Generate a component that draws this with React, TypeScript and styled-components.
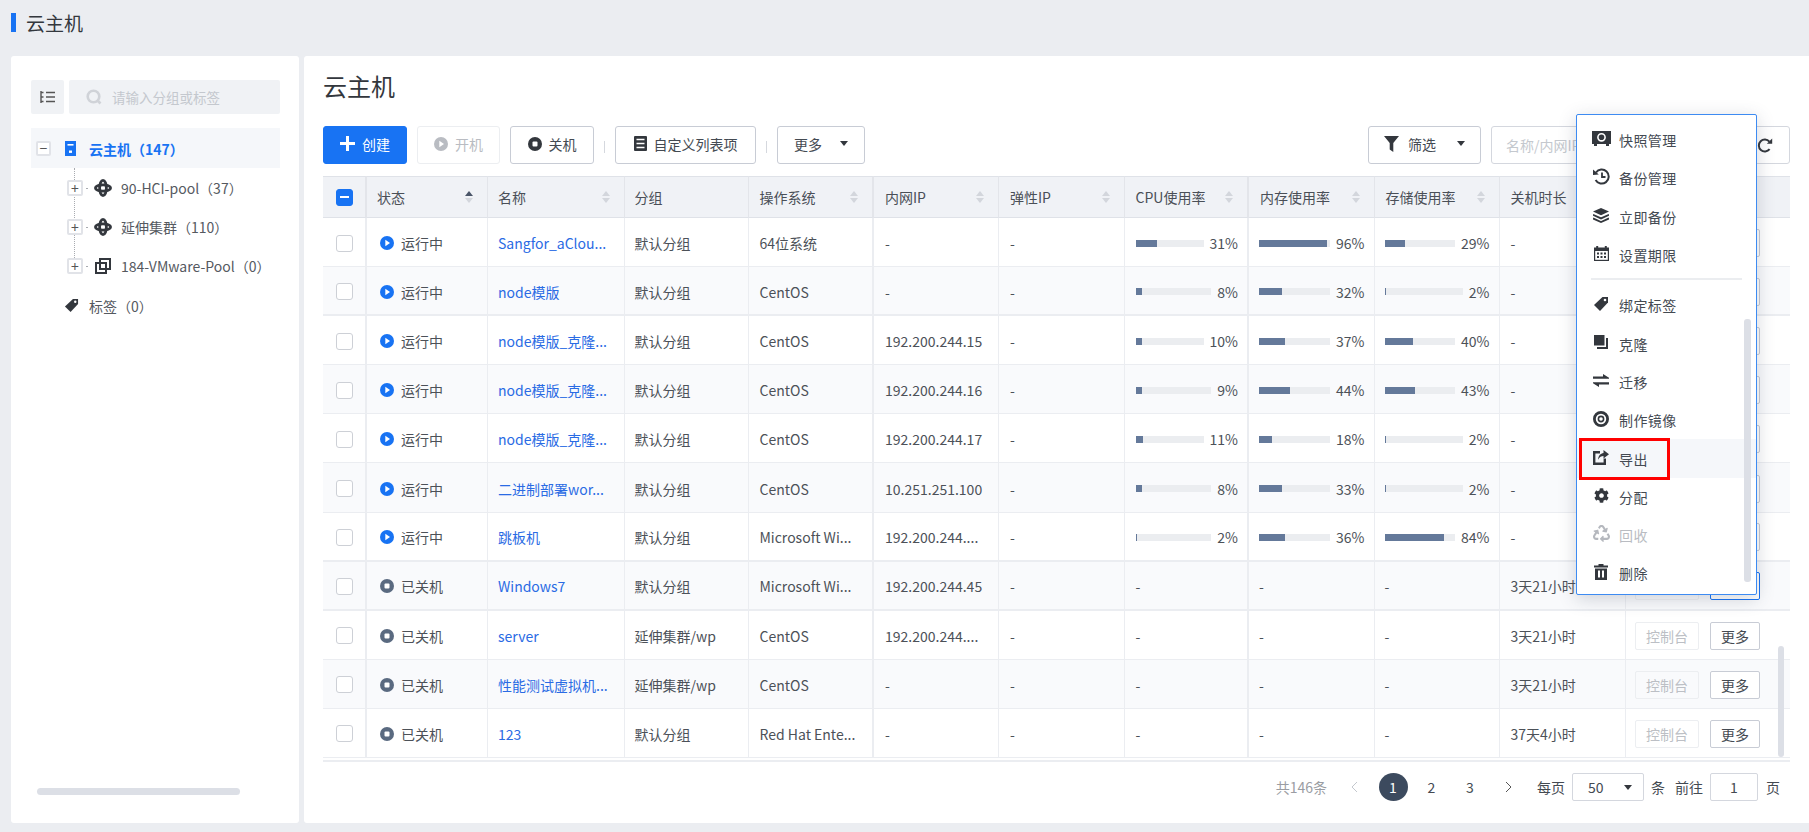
import styled, { createGlobalStyle } from "styled-components";
import { FaCog, FaRecycle } from "react-icons/fa";

const GlobalStyle = createGlobalStyle`
    html, body {
        margin: 0;
        padding: 0;
        background: #ebedf1;
    }
    * {
        box-sizing: border-box;
    }
    body {
        font-family: "Noto Sans CJK SC", "Noto Sans", sans-serif;
        font-size: 14px;
        color: #4c5158;
    }
`;

const Page = styled.div`
    width: 1809px;
    height: 832px;
    display: flex;
    flex-direction: column;
    overflow: hidden;
    background: #ebedf1;
`;

const Header = styled.div`
    height: 56px;
    padding: 13px 0 24px 11px;
    display: flex;
    align-items: center;
    gap: 10px;
    font-size: 19px;
    color: #33373d;
    &::before {
        content: "";
        width: 5px;
        height: 19px;
        background: #1873f3;
    }
`;

const Body = styled.div`
    flex: 1;
    min-height: 0;
    display: flex;
    gap: 5px;
    padding: 0 0 9px 11px;
`;

const LeftPanel = styled.aside`
    width: 288px;
    display: flex;
    flex-direction: column;
    padding: 24px 19px 28px 20px;
    background: #fff;
    border-radius: 3px;
`;

const TreeSearch = styled.div`
    display: flex;
    gap: 5px;
    height: 34px;
    margin-bottom: 14px;
`;

const ToggleBtn = styled.div`
    width: 33px;
    display: flex;
    align-items: center;
    justify-content: center;
    background: #f0f2f5;
    border-radius: 2px;
`;

const SearchBox = styled.div`
    flex: 1;
    display: flex;
    align-items: center;
    gap: 10px;
    padding-left: 17px;
    background: #f0f2f5;
    border-radius: 2px;
    font-size: 13.5px;
    color: #c4c8ce;
`;

const RootRow = styled.div`
    height: 40px;
    display: flex;
    align-items: center;
    padding-left: 5px;
    background: #f5f7fa;
    color: #1873f3;
    font-weight: 700;
`;

const ExpandBox = styled.span<{ $root?: boolean }>`
    width: ${(p) => (p.$root ? 15 : 16)}px;
    height: ${(p) => (p.$root ? 15 : 16)}px;
    flex: none;
    display: flex;
    align-items: center;
    justify-content: center;
    background: #fff;
    border: 2px solid #e1e3e8;
    border-radius: 2px;
    color: #555;
    font-size: 14px;
    font-weight: 400;
    line-height: 1;
    position: relative;
    z-index: 1;
`;

const RootIconSlot = styled.span`
    margin-left: 14px;
    display: flex;
`;

const ChildGroup = styled.div`
    position: relative;
    &::before {
        content: "";
        position: absolute;
        left: 43px;
        top: 0;
        height: 94px;
        border-left: 1px dotted #a8abb0;
    }
`;

const ChildRow = styled.div`
    height: 40px;
    display: flex;
    align-items: center;
    padding-left: 36px;
    margin-top: -1px;
    &:first-child {
        margin-top: 0;
    }
`;

const Stub = styled.span`
    width: 2px;
    height: 1px;
    margin: 0 6px 0 3px;
    background: #a8abb0;
`;

const TreeText = styled.span`
    margin-left: 9px;
    white-space: nowrap;
    color: #55595f;
`;

const RootText = styled.span`
    margin: 2px 0 0 13px;
    white-space: nowrap;
`;

const TagRow = styled.div`
    height: 39px;
    display: flex;
    align-items: center;
    padding-left: 33px;
    gap: 10px;
    color: #55595f;
`;

const TreeScroll = styled.div`
    margin: auto 0 0 6px;
    width: 203px;
    height: 7px;
    border-radius: 4px;
    background: #dcdfe6;
`;

const RightPanel = styled.main`
    flex: 1;
    min-width: 0;
    position: relative;
    display: flex;
    flex-direction: column;
    padding: 12px 19px 0;
    background: #fff;
    border-radius: 3px 0 0 3px;
`;

const Title = styled.h1`
    margin: 0 0 22px;
    height: 36px;
    line-height: 36px;
    font-size: 24px;
    font-weight: 400;
    color: #33373d;
`;

const Toolbar = styled.div`
    height: 38px;
    display: flex;
    align-items: center;
    margin-bottom: 12px;
`;

const Btn = styled.button<{ $w: number; $primary?: boolean; $off?: boolean }>`
    width: ${(p) => p.$w}px;
    height: 38px;
    flex: none;
    display: flex;
    align-items: center;
    justify-content: center;
    gap: 7px;
    padding: 0 0 3px;
    font: inherit;
    border-radius: 3px;
    background: ${(p) => (p.$primary ? "#1873f3" : "#fff")};
    color: ${(p) => (p.$primary ? "#fff" : p.$off ? "#b9bcc2" : "#444a52")};
    border: 1px solid ${(p) => (p.$primary ? "#1873f3" : p.$off ? "#eceef1" : "#c8ccd5")};
`;

const Sep = styled.span`
    width: 1px;
    height: 12px;
    margin: 3px 10px 0;
    background: #d5d8de;
    flex: none;
`;

const Gap = styled.span`
    width: 10px;
    flex: none;
`;

const RightTools = styled.div`
    margin-left: auto;
    display: flex;
    gap: 10px;
`;

const Caret = styled.span`
    width: 0;
    height: 0;
    border-left: 4.5px solid transparent;
    border-right: 4.5px solid transparent;
    border-top: 5px solid #33373d;
`;

const SearchGroup = styled.div`
    display: flex;
    width: 299px;
    height: 38px;
    border: 1px solid #d4d7de;
    border-radius: 3px;
`;

const SearchInput = styled.div`
    flex: 1;
    padding-left: 14px;
    line-height: 36px;
    color: #c4c8ce;
    border-right: 1px solid #d4d7de;
`;

const RefreshBox = styled.div`
    width: 47px;
    display: flex;
    align-items: center;
    justify-content: flex-end;
    padding-right: 16px;
`;

const TableWrap = styled.div`
    position: relative;
    border-bottom: 2px solid #ebedf1;
    padding-bottom: 2px;
`;

const Table = styled.table`
    width: 1467px;
    table-layout: fixed;
    border-collapse: separate;
    border-spacing: 0;
    th {
        height: 42px;
        padding: 0 11px;
        background: #f0f2f6;
        border-top: 1px solid #dfe2e8;
        border-bottom: 1px solid #dfe2e8;
        border-right: 1px solid #e3e5ea;
        font-weight: 400;
        text-align: left;
        color: #4a4f57;
    }
    td {
        height: 49.1px;
        padding: 2px 11px 0;
        border-bottom: 1px solid #ebedf1;
        border-right: 1px solid #ebedf1;
        white-space: nowrap;
    }
    th:nth-child(1), td:nth-child(1),
    th:nth-child(5), td:nth-child(5),
    th:nth-child(8), td:nth-child(8) {
        border-right-width: 2px;
    }
    th:last-child, td:last-child {
        border-right: none;
    }
    td:first-child, th:first-child {
        padding-left: 13px;
        padding-right: 0;
    }
    th:nth-child(2), th:nth-child(3), th:nth-child(4),
    td:nth-child(3), td:nth-child(4) {
        padding-left: 10px;
    }
    td:nth-child(8) {
        padding-right: 9px;
    }
    td:nth-child(9), td:nth-child(10) {
        padding-left: 10px;
        padding-right: 9px;
    }
    td:last-child {
        padding-left: 9.5px;
        padding-right: 0;
    }
`;

const Row = styled.tr<{ $even: boolean; $thick?: boolean }>`
    background: ${(p) => (p.$even ? "#f9fafc" : "#fff")};
    td {
        border-bottom-width: ${(p) => (p.$thick ? 2 : 1)}px;
    }
`;

const HeadInner = styled.div`
    display: flex;
    align-items: center;
    justify-content: space-between;
    padding-right: 3px;
`;

const Sort = styled.span<{ $active?: boolean }>`
    display: flex;
    flex-direction: column;
    gap: 2px;
    &::before, &::after {
        content: "";
        border-left: 4.5px solid transparent;
        border-right: 4.5px solid transparent;
    }
    &::before {
        border-bottom: 5px solid ${(p) => (p.$active ? "#4a5568" : "#d3d6dc")};
    }
    &::after {
        border-top: 5px solid #d3d6dc;
    }
`;

const Check = styled.span<{ $on?: boolean }>`
    display: block;
    width: 17px;
    height: 17px;
    border-radius: 3px;
    border: 1px solid ${(p) => (p.$on ? "#1873f3" : "#cdd0d6")};
    background: ${(p) => (p.$on ? "#1873f3" : "#fff")};
    position: relative;
    &::after {
        content: ${(p) => (p.$on ? '""' : "none")};
        position: absolute;
        left: 3px;
        right: 3px;
        top: 6.5px;
        height: 2px;
        background: #fff;
    }
`;

const Status = styled.div`
    display: flex;
    align-items: center;
    gap: 7px;
    padding-left: 2px;
`;

const Name = styled.a`
    color: #2a6be4;
`;

const Usage = styled.div`
    display: flex;
    align-items: center;
    gap: 6px;
`;

const Track = styled.div`
    flex: 1;
    height: 7px;
    background: #ebedf0;
`;

const Fill = styled.div`
    height: 100%;
    background: #64799a;
`;

const Ops = styled.div`
    display: flex;
    gap: 11px;
`;

const OpBtn = styled.span<{ $off?: boolean; $active?: boolean }>`
    height: 28px;
    display: flex;
    align-items: center;
    justify-content: center;
    width: ${(p) => (p.$off ? 64 : 50)}px;
    border-radius: 2px;
    border: 1px solid ${(p) => (p.$off ? "#eceef1" : p.$active ? "#1873f3" : "#c8ccd5")};
    color: ${(p) => (p.$off ? "#bcbfc5" : "#444a52")};
    background: ${(p) => (p.$off ? "transparent" : "#fff")};
`;

const TableScroll = styled.div`
    position: absolute;
    top: 470px;
    right: 6px;
    width: 6px;
    height: 111px;
    border-radius: 3px;
    background: #dcdfe6;
`;

const Pager = styled.div`
    display: flex;
    align-items: center;
    justify-content: flex-end;
    padding: 11px 10px 0 0;
    color: #444a52;
`;

const Total = styled.span`
    color: #9a9da3;
    margin-right: 13px;
`;

const PageNum = styled.span<{ $active?: boolean; $last?: boolean }>`
    width: 29px;
    height: 28px;
    margin-right: ${(p) => (p.$last ? 0 : 9.5)}px;
    display: flex;
    align-items: center;
    justify-content: center;
    border-radius: 50%;
    background: ${(p) => (p.$active ? "#3c4a5e" : "transparent")};
    color: ${(p) => (p.$active ? "#fff" : "#444a52")};
`;

const Label = styled.span<{ $l: number }>`
    margin-left: ${(p) => p.$l}px;
    white-space: nowrap;
`;

const PageSelect = styled.div`
    width: 72px;
    height: 28px;
    margin-left: 7px;
    padding: 0 11px 0 15px;
    display: flex;
    align-items: center;
    justify-content: space-between;
    border: 1px solid #d4d7de;
    border-radius: 2px;
`;

const PageInput = styled.div`
    width: 48px;
    height: 28px;
    margin-left: 7px;
    display: flex;
    align-items: center;
    justify-content: center;
    border: 1px solid #d4d7de;
    border-radius: 2px;
`;

const Menu = styled.div`
    position: absolute;
    left: 1272px;
    top: 58px;
    width: 181px;
    height: 481px;
    padding-top: 6px;
    background: #fff;
    border: 1px solid #3d8bf2;
    border-radius: 2px;
    box-shadow: 0 4px 18px rgba(60, 70, 90, 0.22);
`;

const MenuItem = styled.div<{ $hover?: boolean; $off?: boolean }>`
    height: 38.3px;
    position: relative;
    display: flex;
    align-items: center;
    gap: 8px;
    padding-left: 14px;
    letter-spacing: 0.4px;
    background: ${(p) => (p.$hover ? "#f5f7fa" : "transparent")};
    color: ${(p) => (p.$off ? "#b9bcc2" : "#444a52")};
`;

const IconSlot = styled.span`
    width: 20px;
    height: 20px;
    display: flex;
    align-items: center;
    justify-content: center;
    margin-top: -3px;
`;

const Divider = styled.div`
    height: 2px;
    margin: 4px 14px 6px;
    background: #ebedf0;
`;

const RedMark = styled.span`
    position: absolute;
    left: 2px;
    top: -1px;
    width: 91px;
    height: 42px;
    border: 3px solid #f00;
`;

const MenuScroll = styled.div`
    position: absolute;
    left: 167px;
    top: 204px;
    width: 7px;
    height: 263px;
    border-radius: 3px;
    background: #dcdfe6;
`;

const dark = "#33373d";

const PlayIcon = ({ color = "#1873f3" }: { color?: string }) => (
    <svg width="14" height="14" viewBox="0 0 14 14">
        <circle cx="7" cy="7" r="7" fill={color} />
        <path d="M5.3 3.8 L10 7 L5.3 10.2 Z" fill="#fff" />
    </svg>
);

const StopIcon = ({ color = "#5a6a80" }: { color?: string }) => (
    <svg width="14" height="14" viewBox="0 0 14 14">
        <circle cx="7" cy="7" r="7" fill={color} />
        <rect x="4.5" y="4.5" width="5" height="5" rx="1" fill="#fff" />
    </svg>
);

const PlusIcon = () => (
    <svg width="15" height="15" viewBox="0 0 15 15">
        <path d="M6 0h3v6h6v3H9v6H6V9H0V6h6z" fill="#fff" />
    </svg>
);

const ListIcon = () => (
    <svg width="13" height="15" viewBox="0 0 13 15">
        <rect width="13" height="15" rx="1" fill={dark} />
        <path d="M2.5 3.5h8M2.5 7.5h8M2.5 11.5h8" stroke="#fff" strokeWidth="1.3" />
    </svg>
);

const FilterIcon = () => (
    <svg width="15" height="16" viewBox="0 0 15 16">
        <path d="M0 0h15L9.3 7v9L5.7 13.5V7z" fill={dark} />
    </svg>
);

const RefreshIcon = () => (
    <svg width="16" height="15" viewBox="0 0 16 15" fill="none">
        <path d="M12.6 11.2A6 6 0 1 1 12.4 3.6" stroke={dark} strokeWidth="2" />
        <path d="M9.8 5.8h5.4V.4z" fill={dark} />
    </svg>
);

const TreeToggleIcon = () => (
    <svg width="15" height="12" viewBox="0 0 15 12" fill="none" stroke="#555" strokeWidth="1.4">
        <path d="M1 0v12M1 1.5h2.5M1 6h2.5M1 10.5h2.5M6 1.5h9M6 6h9M6 10.5h9" />
    </svg>
);

const SearchIcon = () => (
    <svg width="16" height="16" viewBox="0 0 16 16" fill="none" stroke="#d0d3d8" strokeWidth="2.6">
        <circle cx="7.5" cy="7.5" r="5.8" />
        <path d="M11 11l3.5 3.5" />
    </svg>
);

const ServerIcon = () => (
    <svg width="11" height="15" viewBox="0 0 11 15">
        <rect width="11" height="15" fill="#1873f3" />
        <rect x="2.5" y="3" width="6" height="1.6" fill="#fff" />
        <rect x="4" y="9.5" width="3" height="2.4" fill="#fff" />
    </svg>
);

const ClusterIcon = () => (
    <svg width="18" height="18" viewBox="0 0 18 18" fill="none" stroke={dark}>
        <ellipse cx="9" cy="9" rx="3.4" ry="7.6" strokeWidth="2.8" />
        <ellipse cx="9" cy="9" rx="7.6" ry="3.2" strokeWidth="2.8" />
    </svg>
);

const PoolIcon = () => (
    <svg width="18" height="16" viewBox="-1 0 18 16" fill="none" stroke={dark} strokeWidth="2">
        <rect x="5" y="1" width="10" height="10" />
        <rect x="1" y="5" width="10" height="10" />
    </svg>
);

const TagIcon = ({ size = 15 }: { size?: number }) => (
    <svg width={size} height={size} viewBox="0 0 16 16">
        <path d="M9.5 1H15v5.5L7 15 1 9z" fill={dark} />
        <circle cx="12" cy="4" r="1.3" fill="#fff" />
    </svg>
);

const SnapshotIcon = () => (
    <svg width="19" height="17" viewBox="0 0 19 17">
        <path d="M0 1h19v13h-2v2h-3v-2H5v2H2v-2H0z" fill={dark} />
        <circle cx="9.5" cy="7.3" r="3.6" fill="none" stroke="#fff" strokeWidth="1.6" />
    </svg>
);

const HistoryIcon = () => (
    <svg width="17" height="17" viewBox="0 0 17 17" fill="none">
        <path d="M3 4.5A7 7 0 1 1 2.6 12" stroke={dark} strokeWidth="2" />
        <path d="M0 1.5l5.8 5-5.8.6z" fill={dark} />
        <path d="M9 4.5v4.5h3.5" stroke={dark} strokeWidth="1.8" />
    </svg>
);

const LayersIcon = () => (
    <svg width="16" height="15" viewBox="0 0 16 15">
        <path d="M8 0l8 3.6-8 3.6L0 3.6z" fill={dark} />
        <path d="M0 6.8l8 3.6 8-3.6M0 10.4L8 14l8-3.6" fill="none" stroke={dark} strokeWidth="1.8" />
    </svg>
);

const CalendarIcon = () => (
    <svg width="15" height="15" viewBox="0 0 15 15">
        <path d="M0 1.5h2.2V0h2v1.5h6.6V0h2v1.5H15V15H0z" fill={dark} />
        <rect x="1.2" y="5" width="12.6" height="8.8" fill="#fff" />
        <path d="M3 6.5h2v2H3zM6.5 6.5h2v2h-2zM10 6.5h2v2h-2zM3 10h2v2H3zM6.5 10h2v2h-2zM10 10h2v2h-2z" fill={dark} />
    </svg>
);

const CloneIcon = () => (
    <svg width="14" height="14" viewBox="0 0 14 14">
        <rect width="10.5" height="10.5" fill={dark} />
        <path d="M12 3h2v11H3v-2h9z" fill={dark} />
    </svg>
);

const SwapIcon = () => (
    <svg width="16" height="13" viewBox="0 0 16 13">
        <path d="M0 2.5h10V0l6 3.8v.9H0zM16 8.3v2.2H6V13L0 9.2v-.9z" fill={dark} />
    </svg>
);

const DiscIcon = () => (
    <svg width="16" height="16" viewBox="0 0 16 16" fill="none">
        <circle cx="8" cy="8" r="6.6" stroke={dark} strokeWidth="2.8" />
        <circle cx="8" cy="8" r="2.6" stroke={dark} strokeWidth="1.6" />
    </svg>
);

const ExportIcon = () => (
    <svg width="16" height="15" viewBox="0 0 16 15">
        <path d="M7 2.2H1.2v11.6h10.6V8.5" fill="none" stroke={dark} strokeWidth="2.4" />
        <path d="M10.5 0L16 4.3l-5.5 4.3V6C8.5 6 6.5 7 5 9.8c.2-4 2.5-6.6 5.5-6.9z" fill={dark} />
    </svg>
);

const TrashIcon = () => (
    <svg width="14" height="16" viewBox="0 0 14 16">
        <path d="M4.5 0h5v1.5H14v2H0v-2h4.5z" fill={dark} />
        <path d="M1 4.5h12V16H1z" fill={dark} />
        <path d="M4 6.5h2v7H4zM8 6.5h2v7H8z" fill="#fff" />
    </svg>
);

const ChevronIcon = ({ left, color }: { left?: boolean; color: string }) => (
    <svg width="7" height="12" viewBox="0 0 7 12" fill="none" stroke={color} strokeWidth="1">
        <path d={left ? "M6 1L1 6l5 5" : "M1 1l5 5-5 5"} />
    </svg>
);

const colWidths = [44, 121, 136.5, 124, 125.5, 125, 125.5, 124.5, 125.5, 125, 126, 164.5];

const heads: { label: string; sort?: boolean; active?: boolean }[] = [
    { label: "状态", sort: true, active: true },
    { label: "名称", sort: true },
    { label: "分组" },
    { label: "操作系统", sort: true },
    { label: "内网IP", sort: true },
    { label: "弹性IP", sort: true },
    { label: "CPU使用率", sort: true },
    { label: "内存使用率", sort: true },
    { label: "存储使用率", sort: true },
    { label: "关机时长" },
    { label: "" },
];

type Vm = {
    on: boolean;
    name: string;
    group: string;
    os: string;
    ip: string;
    usage?: [number, number, number];
    off?: string;
    thick?: boolean;
    activeMore?: boolean;
};

const vms: Vm[] = [
    { on: true, name: "Sangfor_aClou...", group: "默认分组", os: "64位系统", ip: "-", usage: [31, 96, 29] },
    { on: true, name: "node模版", group: "默认分组", os: "CentOS", ip: "-", usage: [8, 32, 2], thick: true },
    { on: true, name: "node模版_克隆...", group: "默认分组", os: "CentOS", ip: "192.200.244.15", usage: [10, 37, 40] },
    { on: true, name: "node模版_克隆...", group: "默认分组", os: "CentOS", ip: "192.200.244.16", usage: [9, 44, 43] },
    { on: true, name: "node模版_克隆...", group: "默认分组", os: "CentOS", ip: "192.200.244.17", usage: [11, 18, 2] },
    { on: true, name: "二进制部署wor...", group: "默认分组", os: "CentOS", ip: "10.251.251.100", usage: [8, 33, 2] },
    { on: true, name: "跳板机", group: "默认分组", os: "Microsoft Wi...", ip: "192.200.244....", usage: [2, 36, 84], thick: true },
    { on: false, name: "Windows7", group: "默认分组", os: "Microsoft Wi...", ip: "192.200.244.45", off: "3天21小时", thick: true, activeMore: true },
    { on: false, name: "server", group: "延伸集群/wp", os: "CentOS", ip: "192.200.244....", off: "3天21小时" },
    { on: false, name: "性能测试虚拟机...", group: "延伸集群/wp", os: "CentOS", ip: "-", off: "3天21小时" },
    { on: false, name: "123", group: "默认分组", os: "Red Hat Ente...", ip: "-", off: "37天4小时" },
];

const UsageCell = ({ value }: { value?: number }) => {
    if (value === undefined) return <td>-</td>;
    return (
        <td>
            <Usage>
                <Track>
                    <Fill style={{ width: `${value}%` }} />
                </Track>
                <span>{value}%</span>
            </Usage>
        </td>
    );
};

export default function App() {
    return (
        <Page>
            <GlobalStyle />
            <Header>云主机</Header>
            <Body>
                <LeftPanel>
                    <TreeSearch>
                        <ToggleBtn><TreeToggleIcon /></ToggleBtn>
                        <SearchBox><SearchIcon />请输入分组或标签</SearchBox>
                    </TreeSearch>
                    <RootRow>
                        <ExpandBox $root>−</ExpandBox>
                        <RootIconSlot><ServerIcon /></RootIconSlot>
                        <RootText>云主机（147）</RootText>
                    </RootRow>
                    <ChildGroup>
                        <ChildRow>
                            <ExpandBox>+</ExpandBox><Stub /><ClusterIcon />
                            <TreeText>90-HCI-pool（37）</TreeText>
                        </ChildRow>
                        <ChildRow>
                            <ExpandBox>+</ExpandBox><Stub /><ClusterIcon />
                            <TreeText>延伸集群（110）</TreeText>
                        </ChildRow>
                        <ChildRow>
                            <ExpandBox>+</ExpandBox><Stub /><PoolIcon />
                            <TreeText>184-VMware-Pool（0）</TreeText>
                        </ChildRow>
                    </ChildGroup>
                    <TagRow><TagIcon />标签（0）</TagRow>
                    <TreeScroll />
                </LeftPanel>
                <RightPanel>
                    <Title>云主机</Title>
                    <Toolbar>
                        <Btn $w={84} $primary><PlusIcon />创建</Btn>
                        <Gap />
                        <Btn $w={83} $off><PlayIcon color="#b9bcc2" />开机</Btn>
                        <Gap />
                        <Btn $w={84}><StopIcon color={dark} />关机</Btn>
                        <Sep />
                        <Btn $w={141}><ListIcon />自定义列表项</Btn>
                        <Sep />
                        <Btn $w={88} style={{ gap: 18 }}>更多<Caret /></Btn>
                        <RightTools>
                            <Btn $w={113} style={{ gap: 9 }}>
                                <FilterIcon />筛选<Caret style={{ marginLeft: 12 }} />
                            </Btn>
                            <SearchGroup>
                                <SearchInput>名称/内网IP</SearchInput>
                                <RefreshBox><RefreshIcon /></RefreshBox>
                            </SearchGroup>
                        </RightTools>
                    </Toolbar>
                    <TableWrap>
                        <Table>
                            <colgroup>
                                {colWidths.map((w, i) => <col key={i} style={{ width: w }} />)}
                            </colgroup>
                            <thead>
                                <tr>
                                    <th><Check $on /></th>
                                    {heads.map((h, i) => (
                                        <th key={i}>
                                            <HeadInner>
                                                {h.label}
                                                {h.sort && <Sort $active={h.active} />}
                                            </HeadInner>
                                        </th>
                                    ))}
                                </tr>
                            </thead>
                            <tbody>
                                {vms.map((vm, i) => (
                                    <Row key={i} $even={i % 2 === 1} $thick={vm.thick}>
                                        <td><Check /></td>
                                        <td>
                                            <Status>
                                                {vm.on ? <PlayIcon /> : <StopIcon />}
                                                {vm.on ? "运行中" : "已关机"}
                                            </Status>
                                        </td>
                                        <td><Name>{vm.name}</Name></td>
                                        <td>{vm.group}</td>
                                        <td>{vm.os}</td>
                                        <td>{vm.ip}</td>
                                        <td>-</td>
                                        <UsageCell value={vm.usage?.[0]} />
                                        <UsageCell value={vm.usage?.[1]} />
                                        <UsageCell value={vm.usage?.[2]} />
                                        <td>{vm.off ?? "-"}</td>
                                        <td>
                                            <Ops>
                                                <OpBtn $off>控制台</OpBtn>
                                                <OpBtn $active={vm.activeMore}>更多</OpBtn>
                                            </Ops>
                                        </td>
                                    </Row>
                                ))}
                            </tbody>
                        </Table>
                        <TableScroll />
                    </TableWrap>
                    <Pager>
                        <Total>共146条</Total>
                        <PageNum><ChevronIcon left color="#c4c8ce" /></PageNum>
                        <PageNum $active>1</PageNum>
                        <PageNum>2</PageNum>
                        <PageNum>3</PageNum>
                        <PageNum $last><ChevronIcon color="#555" /></PageNum>
                        <Label $l={14}>每页</Label>
                        <PageSelect>50<Caret /></PageSelect>
                        <Label $l={7}>条</Label>
                        <Label $l={10}>前往</Label>
                        <PageInput>1</PageInput>
                        <Label $l={8}>页</Label>
                    </Pager>
                    <Menu>
                        <MenuItem><IconSlot><SnapshotIcon /></IconSlot>快照管理</MenuItem>
                        <MenuItem><IconSlot><HistoryIcon /></IconSlot>备份管理</MenuItem>
                        <MenuItem><IconSlot><LayersIcon /></IconSlot>立即备份</MenuItem>
                        <MenuItem><IconSlot><CalendarIcon /></IconSlot>设置期限</MenuItem>
                        <Divider />
                        <MenuItem><IconSlot><TagIcon size={16} /></IconSlot>绑定标签</MenuItem>
                        <MenuItem><IconSlot><CloneIcon /></IconSlot>克隆</MenuItem>
                        <MenuItem><IconSlot><SwapIcon /></IconSlot>迁移</MenuItem>
                        <MenuItem><IconSlot><DiscIcon /></IconSlot>制作镜像</MenuItem>
                        <MenuItem $hover>
                            <IconSlot><ExportIcon /></IconSlot>导出
                            <RedMark />
                        </MenuItem>
                        <MenuItem><IconSlot><FaCog size={15} color={dark} /></IconSlot>分配</MenuItem>
                        <MenuItem $off><IconSlot><FaRecycle size={17} color="#b5b8be" /></IconSlot>回收</MenuItem>
                        <MenuItem><IconSlot><TrashIcon /></IconSlot>删除</MenuItem>
                        <MenuScroll />
                    </Menu>
                </RightPanel>
            </Body>
        </Page>
    );
}
